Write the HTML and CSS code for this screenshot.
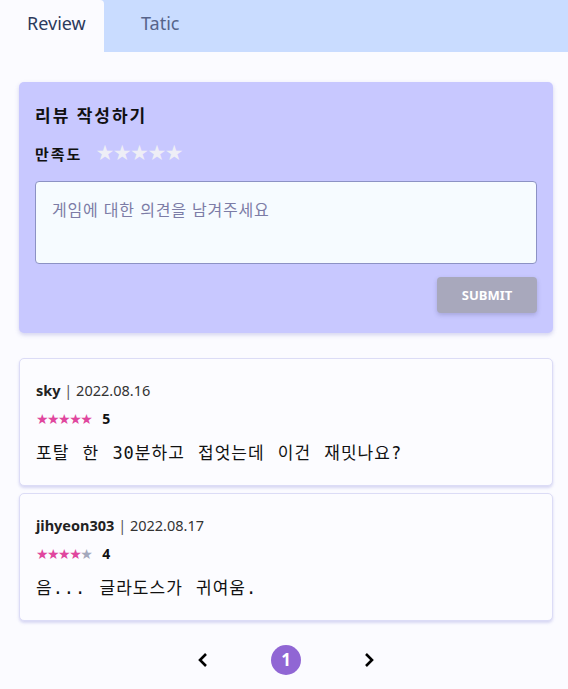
FILE: index.html
```html
<!DOCTYPE html>
<html lang="ko">
<head>
    <meta charset="UTF-8">
    <meta name="viewport" content="width=device-width, initial-scale=1.0">
    <title>Review</title>
    <link rel="stylesheet" href="styles.css">
</head>
<body>
    <div class="tabs">
        <div class="tab active">Review</div>
        <div class="tab">Tatic</div>
    </div>

    <div class="content">
        <div class="write-card">
            <h2 class="write-title">리뷰 작성하기</h2>
            <div class="rating-row">
                <span class="rating-label">만족도</span>
                <span class="empty-stars">★★★★★</span>
            </div>
            <textarea class="review-input" placeholder="게임에 대한 의견을 남겨주세요"></textarea>
            <div class="button-row">
                <button class="submit-button">SUBMIT</button>
            </div>
        </div>

        <div class="review-card">
            <div class="review-meta"><b>sky</b> <span class="bar">|</span> 2022.08.16</div>
            <div class="review-score">
                <span class="stars">★★★★★</span>
                <b>5</b>
            </div>
            <p class="review-text">포탈 한 30분하고 접엇는데 이건 재밋나요?</p>
        </div>

        <div class="review-card">
            <div class="review-meta"><b>jihyeon303</b> <span class="bar">|</span> 2022.08.17</div>
            <div class="review-score">
                <span class="stars">★★★★<span class="off">★</span></span>
                <b>4</b>
            </div>
            <p class="review-text">음... 글라도스가 귀여움.</p>
        </div>

        <div class="pager">
            <span class="arrow">
                <svg width="12" height="16" viewBox="0 0 12 16"><path d="M9 2 L3 8 L9 14" fill="none" stroke="#000" stroke-width="2.6"/></svg>
            </span>
            <span class="page current">1</span>
            <span class="arrow">
                <svg width="12" height="16" viewBox="0 0 12 16"><path d="M3 2 L9 8 L3 14" fill="none" stroke="#000" stroke-width="2.6"/></svg>
            </span>
        </div>
    </div>
</body>
</html>
```

FILE: styles.css
```css
body {
    margin: 0;
    font-family: "Noto Sans", "Noto Sans CJK KR", sans-serif;
    background-color: #fbfbff;
    color: #111;
}
.tabs {
    display: flex;
    height: 52px;
    background-color: #c9dcff;
}
.tab {
    box-sizing: border-box;
    padding-left: 37px;
    line-height: 46px;
    font-size: 18px;
    color: #56648a;
}
.tab.active {
    width: 104px;
    padding-left: 27px;
    background-color: #fbfbff;
    color: #2c3a5c;
    border-top-right-radius: 4px;
}
.content {
    padding: 30px 15px 0 19px;
}
.write-card {
    background-color: #c8c8ff;
    border-radius: 5px;
    padding: 20px 16px 20px 16px;
    box-shadow: 0 2px 4px rgba(120, 120, 200, 0.3);
}
.write-title {
    margin: 0;
    font-size: 17px;
    font-weight: 700;
    letter-spacing: 2px;
    line-height: 28px;
}
.rating-row {
    display: flex;
    align-items: center;
    gap: 13px;
    margin-top: 11px;
    height: 24px;
}
.rating-label {
    font-size: 15px;
    font-weight: 700;
    letter-spacing: 2px;
}
.empty-stars {
    font-family: "DejaVu Sans", sans-serif;
    font-size: 21px;
    letter-spacing: -1.5px;
    color: #eeeef6;
}
.review-input {
    display: block;
    box-sizing: border-box;
    width: 100%;
    height: 83px;
    margin-top: 16px;
    padding: 15px 16px;
    border: 1px solid #8c92c4;
    border-radius: 4px;
    background-color: #f6fbff;
    font-family: "Noto Sans CJK KR", sans-serif;
    font-size: 16px;
    letter-spacing: 0.8px;
    resize: none;
}
.review-input::placeholder {
    color: #7c7ca6;
}
.button-row {
    display: flex;
    justify-content: flex-end;
    margin-top: 13px;
}
.submit-button {
    width: 100px;
    height: 36px;
    background: #a8a8bc;
    color: #fff;
    border: none;
    border-radius: 4px;
    font-family: "Noto Sans", sans-serif;
    font-size: 13px;
    font-weight: 700;
    box-shadow: 0 2px 4px rgba(90, 90, 140, 0.3);
}
.review-card {
    margin-top: 25px;
    background-color: #fcfcff;
    border: 1px solid #dcdcf6;
    border-radius: 5px;
    padding: 19px 16px 17px 16px;
    box-shadow: 0 2px 3px rgba(150, 150, 220, 0.35);
}
.review-card + .review-card {
    margin-top: 7px;
}
.review-meta {
    font-size: 14.5px;
    color: #333;
    line-height: 24px;
}
.review-meta b {
    color: #222;
}
.bar {
    color: #555;
}
.review-score {
    display: flex;
    align-items: center;
    gap: 11px;
    margin-top: 5px;
    font-size: 14px;
    line-height: 24px;
}
.stars {
    font-family: "DejaVu Sans", sans-serif;
    font-size: 14px;
    letter-spacing: -1.5px;
    color: #e0469e;
}
.stars .off {
    color: #a4a8bc;
}
.review-text {
    margin: 7px 0 0 0;
    font-family: "DejaVu Sans Mono", "Noto Sans CJK KR", monospace;
    font-weight: 400;
    font-size: 17px;
    letter-spacing: 1px;
    word-spacing: 2px;
    line-height: 30px;
}
.pager {
    display: flex;
    justify-content: center;
    align-items: center;
    gap: 62px;
    height: 58px;
    margin-top: 10px;
}
.page {
    width: 30px;
    height: 30px;
    border-radius: 50%;
    text-align: center;
    line-height: 30px;
    font-size: 17px;
    font-weight: 700;
}
.page.current {
    background-color: #9066d4;
    color: #fff;
}
.arrow {
    display: flex;
}
```
